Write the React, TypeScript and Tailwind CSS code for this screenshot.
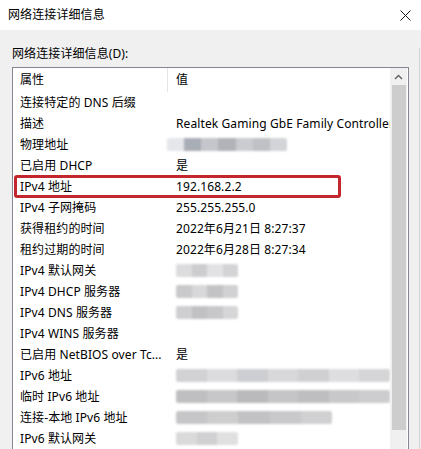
import React from "react";

type Blur = { w: number; shift?: number; tones: string[] };

const rows: { k: string; v?: string; blur?: Blur }[] = [
  { k: "连接特定的 DNS 后缀" },
  { k: "描述", v: "Realtek Gaming GbE Family Controller" },
  { k: "物理地址", blur: { w: 120, shift: -9, tones: ["#e4e6ea", "#a9adb6", "#c4c6cb", "#b1b3b8", "#cbccd0", "#bfc1c5", "#d3d4d7"] } },
  { k: "已启用 DHCP", v: "是" },
  { k: "IPv4 地址", v: "192.168.2.2" },
  { k: "IPv4 子网掩码", v: "255.255.255.0" },
  { k: "获得租约的时间", v: "2022年6月21日 8:27:37" },
  { k: "租约过期的时间", v: "2022年6月28日 8:27:34" },
  { k: "IPv4 默认网关", blur: { w: 62, tones: ["#dcdcde", "#cdcdcf", "#e2e2e4", "#d4d4d6"] } },
  { k: "IPv4 DHCP 服务器", blur: { w: 62, tones: ["#c9c9cb", "#d8d8da", "#c3c3c5", "#d1d1d3"] } },
  { k: "IPv4 DNS 服务器", blur: { w: 62, tones: ["#cfcfd1", "#c1c1c3", "#c8c8ca", "#d6d6d8"] } },
  { k: "IPv4 WINS 服务器" },
  { k: "已启用 NetBIOS over Tc...", v: "是" },
  { k: "IPv6 地址", blur: { w: 214, tones: ["#d2d2d4", "#dcdcde", "#cdced2", "#d8d8da", "#d0d0d3", "#dedee0", "#d5d5d7"] } },
  { k: "临时 IPv6 地址", blur: { w: 214, tones: ["#bfbfc1", "#c7c7c9", "#bababc", "#c5c5c7", "#bebec0", "#c8c8cb", "#cdcdcf"] } },
  { k: "连接-本地 IPv6 地址", blur: { w: 156, tones: ["#c6c6c8", "#cececf", "#c2c2c4", "#c9c9cb", "#d0d0d2"] } },
  { k: "IPv6 默认网关", blur: { w: 62, tones: ["#dadadb", "#d0d0d2", "#e0e0e1"] } },
];

function BlurBlock({ b }: { b: Blur }) {
  return (
    <div
      className="flex h-[13px] blur-[1px] rounded-[2px] overflow-hidden"
      style={{ width: b.w, marginLeft: b.shift ?? 0 }}
    >
      {b.tones.map((t, i) => (
        <div key={i} className="flex-1 h-full" style={{ background: t }} />
      ))}
    </div>
  );
}

export default function App() {
  return (
    <div
      className="w-[421px] h-[449px] overflow-hidden bg-[#f0f0f0] text-[12px] tracking-[0.1px] text-black relative"
      style={{ fontFamily: '"Noto Sans", "Noto Sans CJK SC", sans-serif' }}
    >
      {/* title bar */}
      <div className="h-[30px] bg-white flex items-center justify-between pl-[8px] pr-[10px]">
        <span className="leading-none">网络连接详细信息</span>
        <svg width="11" height="11" viewBox="0 0 11 11" className="mt-[1px]">
          <path d="M0.5 0.5 L10.5 10.5 M10.5 0.5 L0.5 10.5" stroke="#1a1a1a" strokeWidth="1" />
        </svg>
      </div>

      {/* right window edge */}
      <div className="absolute right-[1px] top-[48px] bottom-0 w-px bg-[#d0d0d0]" />

      <div className="pl-[12px] pt-[16px]">
        <div className="leading-[16px] h-[21px]">网络连接详细信息(D):</div>
        <div className="w-[397px] h-[400px] border border-[#828790] bg-white flex">
          <div className="w-[377px] shrink-0 flex flex-col overflow-hidden">
            {/* header */}
            <div className="h-[24px] flex items-center shrink-0">
              <div className="w-[155px] shrink-0 h-full flex items-center pl-[7px] border-r border-[#e5e5e5]">属性</div>
              <div className="pl-[8px]">值</div>
            </div>
            {rows.map((r, i) => (
              <div key={i} className="h-[21px] flex items-center shrink-0 relative">
                <div className="w-[156px] shrink-0 pl-[7px] whitespace-nowrap">{r.k}</div>
                <div className="pl-[7px] shrink-0 whitespace-nowrap">
                  {r.v ? r.v : r.blur ? <BlurBlock b={r.blur} /> : null}
                </div>
                {r.k === "IPv4 地址" && (
                  <div className="absolute left-[1px] top-[-1px] w-[327px] h-[23px] border-[3px] border-[#c3262c] rounded-[3px]" />
                )}
              </div>
            ))}
          </div>
          {/* scrollbar */}
          <div className="w-[17px] bg-[#f0f0f0] flex flex-col items-center shrink-0">
            <div className="h-[17px] w-full flex items-center justify-center">
              <svg width="9" height="6" viewBox="0 0 9 6">
                <path d="M1 5 L4.5 1.5 L8 5" stroke="#606060" strokeWidth="1.4" fill="none" />
              </svg>
            </div>
            <div className="w-[14px] h-[345px] bg-[#cdcdcd]" />
          </div>
        </div>
      </div>
    </div>
  );
}
